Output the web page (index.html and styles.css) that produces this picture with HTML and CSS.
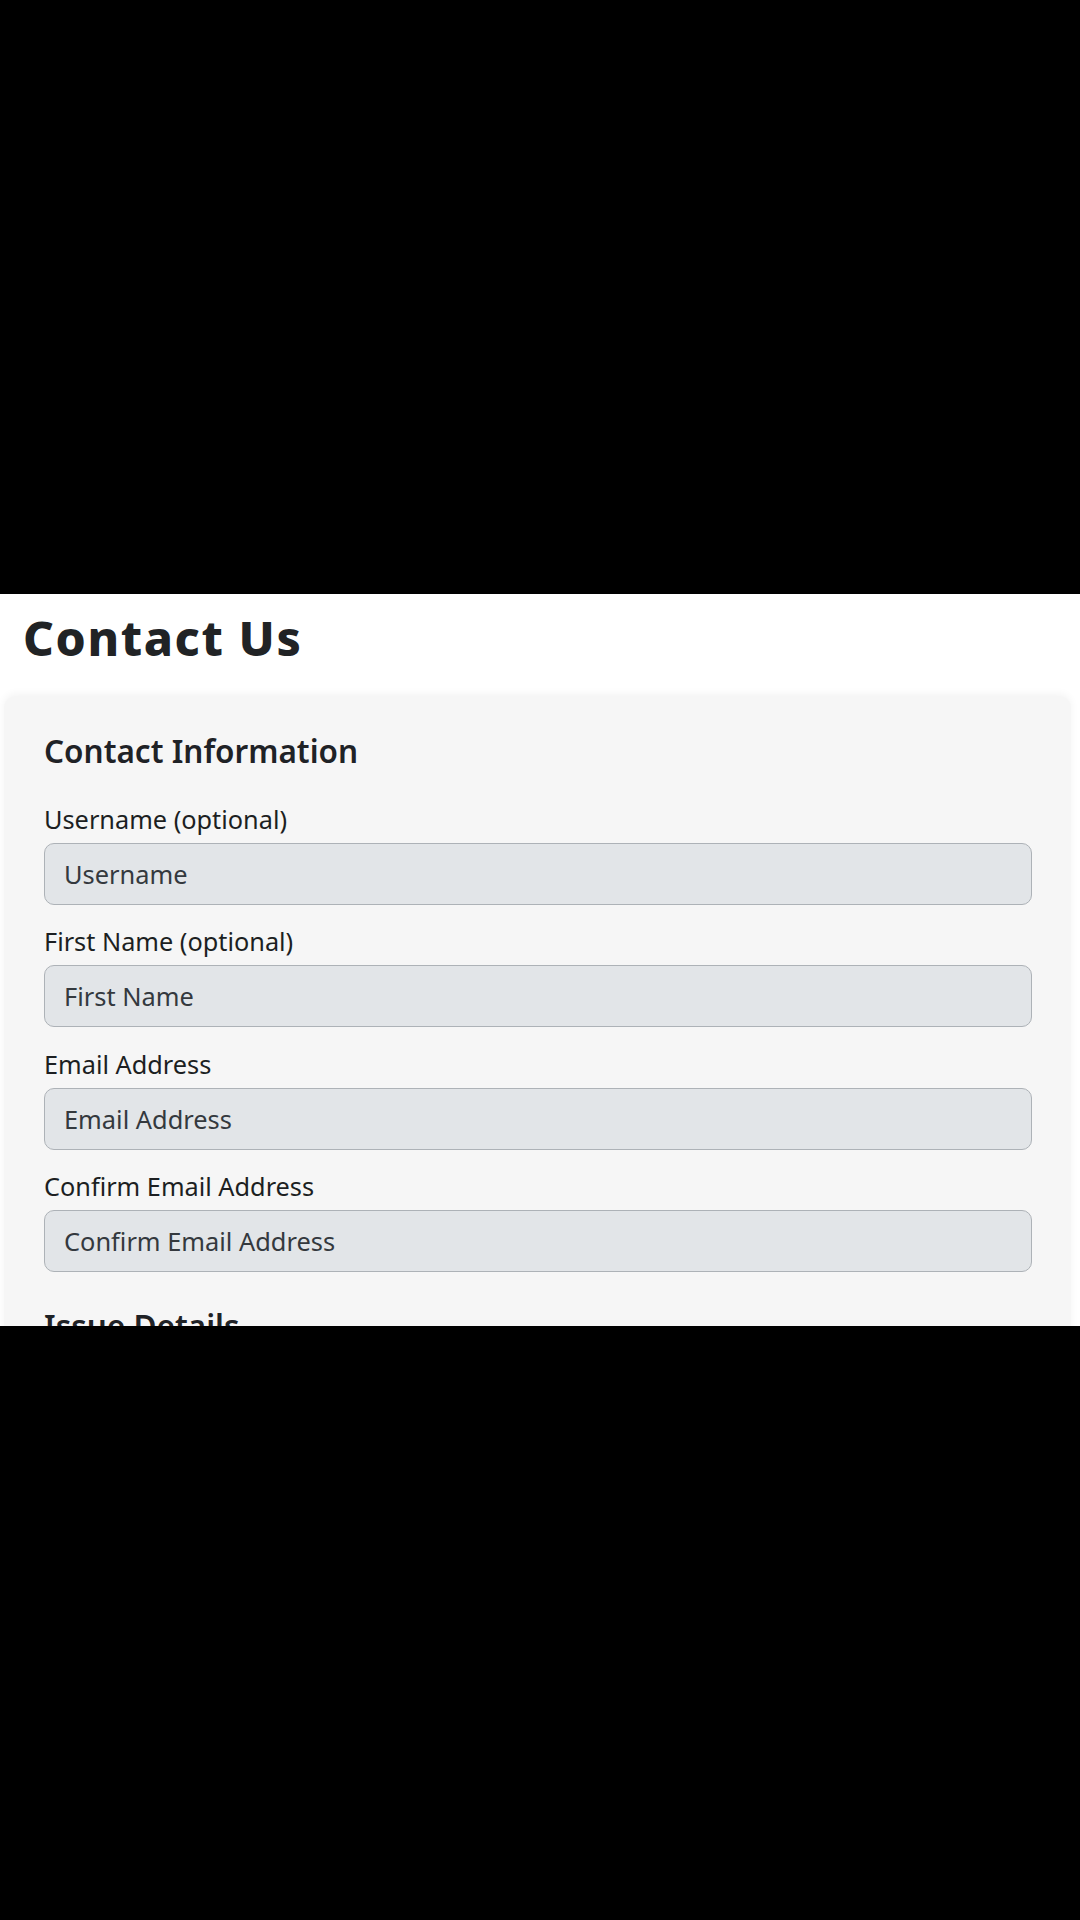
FILE: index.html
```html
<!DOCTYPE html>
<html lang="en">
<head>
<meta charset="utf-8">
<title>Contact Us</title>
<link rel="stylesheet" href="styles.css">
</head>
<body>
<div class="frame">
  <main class="page">
    <h1 class="page-title">Contact Us</h1>
    <form class="card">
      <section class="section">
        <h2 class="section-title">Contact Information</h2>
        <div class="fields">
          <div class="field">
            <label class="field-label" for="username">Username (optional)</label>
            <input class="field-input" id="username" type="text" placeholder="Username">
          </div>
          <div class="field">
            <label class="field-label" for="first-name">First Name (optional)</label>
            <input class="field-input" id="first-name" type="text" placeholder="First Name">
          </div>
          <div class="field">
            <label class="field-label" for="email">Email Address</label>
            <input class="field-input" id="email" type="email" placeholder="Email Address">
          </div>
          <div class="field">
            <label class="field-label" for="email-confirm">Confirm Email Address</label>
            <input class="field-input" id="email-confirm" type="email" placeholder="Confirm Email Address">
          </div>
        </div>
      </section>
      <section class="section">
        <h2 class="section-title">Issue Details</h2>
      </section>
    </form>
  </main>
</div>
</body>
</html>
```

FILE: styles.css
```css
html, body {
  margin: 0;
  padding: 0;
  background: #000;
}

body {
  font-family: "Noto Sans", "Open Sans", sans-serif;
  color: #212529;
}

.frame {
  width: 1080px;
  height: 1920px;
  padding-top: 594px;
  box-sizing: border-box;
}

.page {
  height: 732px;
  background: #fff;
  overflow: hidden;
  padding-top: 16px;
  box-sizing: border-box;
}

.page-title {
  margin: 0 0 31px 23px;
  font-size: 48px;
  line-height: 55px;
  font-weight: 800;
  letter-spacing: 1.6px;
  color: #212325;
}

.card {
  margin-left: 4px;
  width: 1067px;
  box-sizing: border-box;
  padding: 38px 39px 40px 40px;
  background: #f6f6f6;
  border-radius: 12px;
  box-shadow: 0 -2px 8px rgba(0, 0, 0, 0.05);
  display: flex;
  flex-direction: column;
  gap: 37px;
}

.section-title {
  margin: 0 0 36.5px;
  font-size: 31.5px;
  line-height: 34px;
  font-weight: 600;
  color: #1f2226;
}

.fields {
  display: flex;
  flex-direction: column;
  gap: 22.5px;
}

.field {
  display: flex;
  flex-direction: column;
  gap: 10px;
}

.field-label {
  font-size: 25.3px;
  line-height: 28px;
  color: #1c1f22;
}

.field-input {
  height: 62px;
  box-sizing: border-box;
  margin: 0;
  padding: 0 20px 0 19px;
  border: 1px solid #adb2b7;
  border-radius: 10px;
  background: #e2e5e8;
  font-family: inherit;
  font-size: 25.4px;
  color: #212529;
  outline: none;
}

.field-input::placeholder {
  color: #34393e;
  opacity: 1;
}
```
